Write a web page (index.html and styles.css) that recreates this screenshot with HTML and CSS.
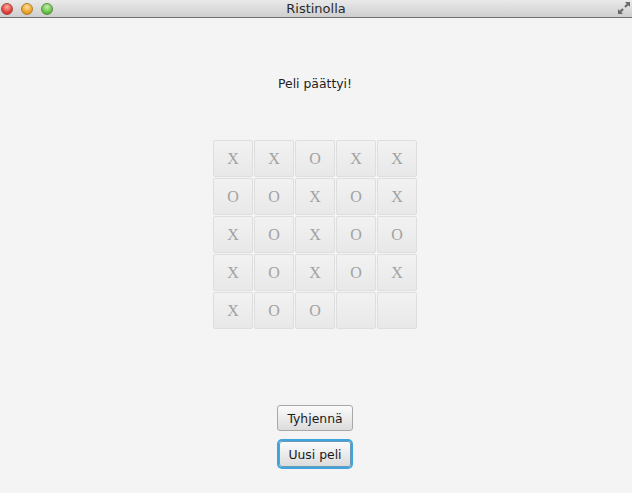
FILE: index.html
```html
<!DOCTYPE html>
<html lang="fi">
<head>
<meta charset="utf-8">
<title>Ristinolla</title>
<link rel="stylesheet" href="styles.css">
</head>
<body>
<div class="window">
  <div class="titlebar">
    <div class="lights">
      <span class="light red"></span>
      <span class="light yellow"></span>
      <span class="light green"></span>
    </div>
    <div class="title">Ristinolla</div>
    <svg class="fullscreen" width="14" height="14" viewBox="0 0 14 14">
      <path d="M8 1 L13 1 L13 6 L11.3 4.3 L8.8 6.8 L7.2 5.2 L9.7 2.7 Z" fill="#6a6a6a"/>
      <path d="M1 8 L1 13 L6 13 L4.3 11.3 L6.8 8.8 L5.2 7.2 L2.7 9.7 Z" fill="#6a6a6a"/>
    </svg>
  </div>
  <main class="content">
    <div class="status">Peli päättyi!</div>
    <div class="board">
      <div class="cell">X</div><div class="cell">X</div><div class="cell">O</div><div class="cell">X</div><div class="cell">X</div>
      <div class="cell">O</div><div class="cell">O</div><div class="cell">X</div><div class="cell">O</div><div class="cell">X</div>
      <div class="cell">X</div><div class="cell">O</div><div class="cell">X</div><div class="cell">O</div><div class="cell">O</div>
      <div class="cell">X</div><div class="cell">O</div><div class="cell">X</div><div class="cell">O</div><div class="cell">X</div>
      <div class="cell">X</div><div class="cell">O</div><div class="cell">O</div><div class="cell"></div><div class="cell"></div>
    </div>
    <div class="actions">
      <button class="btn">Tyhjennä</button>
      <button class="btn focused">Uusi peli</button>
    </div>
  </main>
</div>
</body>
</html>
```
FILE: styles.css
```css
html, body {
  margin: 0;
  padding: 0;
}
body {
  width: 632px;
  height: 493px;
  background: #f4f4f4;
  font-family: "DejaVu Sans", sans-serif;
  overflow: hidden;
}
.window {
  display: flex;
  flex-direction: column;
  height: 493px;
}
.titlebar {
  height: 17px;
  border-bottom: 1px solid #6f6f6f;
  background: linear-gradient(#e9e9e9, #cfcfcf);
  display: flex;
  align-items: center;
  position: relative;
}
.lights {
  display: flex;
  gap: 8px;
  padding-left: 1px;
}
.light {
  width: 12px;
  height: 12px;
  border-radius: 50%;
  box-sizing: border-box;
}
.red { background: radial-gradient(circle at 50% 30%, #ffb0a8, #e0443c 60%, #b82a22); border: 1px solid #a8443c; }
.yellow { background: radial-gradient(circle at 50% 30%, #ffe2a0, #eea32a 60%, #c47e12); border: 1px solid #b08030; }
.green { background: radial-gradient(circle at 50% 30%, #c8f0b0, #6ac24a 60%, #3f9a2a); border: 1px solid #5a9040; }
.title {
  position: absolute;
  left: 0;
  right: 0;
  text-align: center;
  font-size: 13px;
  color: #2a2a2a;
  line-height: 17px;
}
.fullscreen {
  position: absolute;
  right: 1px;
  top: 1px;
}
.content {
  display: flex;
  flex-direction: column;
  align-items: center;
  padding-top: 58px;
  padding-right: 2px;
}
.status {
  font-size: 12.4px;
  line-height: 16px;
  color: #222;
}
.board {
  margin-top: 48px;
  display: grid;
  grid-template-columns: repeat(5, 40px);
  grid-auto-rows: 37px;
  gap: 1px;
}
.cell {
  box-sizing: border-box;
  border: 1px solid #dedede;
  border-radius: 2px;
  background: linear-gradient(#f2f2f2, #e8e8e8);
  display: flex;
  align-items: center;
  justify-content: center;
  font-family: "Liberation Serif", serif;
  font-size: 16px;
  color: #a2a2a2;
}
.actions {
  margin-top: 76px;
  display: flex;
  flex-direction: column;
  align-items: center;
  gap: 10px;
}
.btn {
  font-family: "DejaVu Sans", sans-serif;
  font-size: 12.4px;
  color: #1a1a1a;
  height: 26px;
  padding: 0 9px;
  border: 1px solid #a8a8a8;
  border-radius: 3px;
  background: linear-gradient(#fbfbfb, #dcdcdc);
}
.btn.focused {
  padding: 0 8px;
  box-shadow: 0 0 0 2px #3fa4de;
  border-color: #6a9ab8;
}
```
